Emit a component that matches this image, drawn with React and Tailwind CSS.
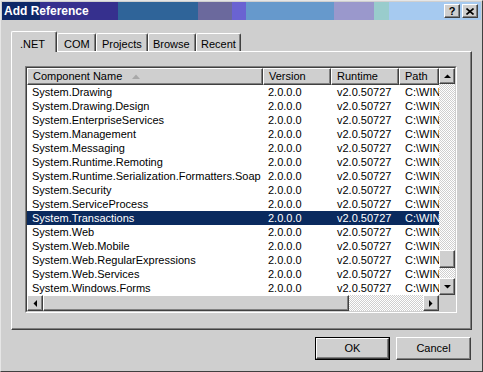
import React from "react";

const raised =
  "border border-t-white border-l-white border-r-[#404040] border-b-[#404040] shadow-[inset_-1px_-1px_#808080]";
const checker =
  "bg-[repeating-conic-gradient(#cfcfcf_0%_25%,#ffffff_0%_50%)] bg-[length:2px_2px]";

const assemblies = [
  "System.Drawing",
  "System.Drawing.Design",
  "System.EnterpriseServices",
  "System.Management",
  "System.Messaging",
  "System.Runtime.Remoting",
  "System.Runtime.Serialization.Formatters.Soap",
  "System.Security",
  "System.ServiceProcess",
  "System.Transactions",
  "System.Web",
  "System.Web.Mobile",
  "System.Web.RegularExpressions",
  "System.Web.Services",
  "System.Windows.Forms",
];

// little black triangle for the scroll buttons
const Arrow = ({ dir }) => {
  const pts = {
    up: "0,4 7,4 3.5,0.5",
    down: "0,0 7,0 3.5,3.5",
    left: "4,0 4,7 0.5,3.5",
    right: "0,0 0,7 3.5,3.5",
  }[dir];
  const vert = dir === "up" || dir === "down";
  return (
    <svg width={vert ? 7 : 4} height={vert ? 4 : 7} viewBox={vert ? "0 0 7 4" : "0 0 4 7"}>
      <polygon points={pts} fill="#000" />
    </svg>
  );
};

const HeaderCell = ({ w, children, grow }) => (
  <div
    className={`${raised} h-[17px] flex items-center pl-[5px] bg-[#cfcfcf] ${grow ? "flex-1" : ""}`}
    style={grow ? undefined : { width: w }}
  >
    {children}
  </div>
);

export default function App() {
  return (
    <div
      className="w-[483px] h-[372px] bg-[#cfcfcf] border border-t-[#e6e6e6] border-l-[#e6e6e6] border-r-[#404040] border-b-[#404040] p-[1px] flex flex-col text-[11px] text-black overflow-hidden"
      style={{ fontFamily: '"Liberation Sans", Arial, sans-serif' }}
    >
      {/* title bar */}
      <div className="h-[18px] flex items-center justify-between pl-[2px] pr-[3px] bg-[linear-gradient(to_right,#0e2868_0px,#0e2868_38px,#36308e_38px,#36308e_116px,#2f6499_116px,#2f6499_196px,#6b699d_196px,#6b699d_230px,#6a63d2_230px,#6a63d2_244px,#6699cc_244px,#6699cc_332px,#9a98cc_332px,#9a98cc_372px,#99cccc_372px,#99cccc_387px,#a6caf0_387px,#a6caf0_100%)]">
        <span className="text-white font-bold text-[12px] leading-none">Add Reference</span>
        <div className="flex gap-[2px]">
          <div className={`${raised} w-[16px] h-[14px] bg-[#cfcfcf] flex items-center justify-center font-bold text-[11px] leading-none`}>
            ?
          </div>
          <div className={`${raised} w-[16px] h-[14px] bg-[#cfcfcf] flex items-center justify-center`}>
            <svg width="8" height="7" viewBox="0 0 8 7">
              <path d="M0.5 0.5 L7.5 6.5 M7.5 0.5 L0.5 6.5" stroke="#000" strokeWidth="1.6" />
            </svg>
          </div>
        </div>
      </div>

      {/* tabs */}
      <div className="mt-[11px] ml-[9px] h-[20px] flex items-end">
        <div className="relative z-10 w-[46px] h-[21px] -mb-[1px] bg-[#cfcfcf] border-t border-l border-white border-r border-r-[#404040] shadow-[inset_-1px_0_#808080] rounded-t-[2px] pl-[8px] pt-[4px]">
          .NET
        </div>
        <div className="w-[39px] h-[18px] border-t border-l border-white border-r border-r-[#404040] shadow-[inset_-1px_0_#808080] rounded-t-[2px] pl-[6px] pt-[2px]">
          COM
        </div>
        <div className="w-[52px] h-[18px] border-t border-l border-white border-r border-r-[#404040] shadow-[inset_-1px_0_#808080] rounded-t-[2px] pl-[5px] pt-[2px]">
          Projects
        </div>
        <div className="w-[48px] h-[18px] border-t border-l border-white border-r border-r-[#404040] shadow-[inset_-1px_0_#808080] rounded-t-[2px] pl-[4px] pt-[2px]">
          Browse
        </div>
        <div className="w-[45px] h-[18px] border-t border-l border-white border-r border-r-[#404040] shadow-[inset_-1px_0_#808080] rounded-t-[2px] pl-[4px] pt-[2px]">
          Recent
        </div>
      </div>

      {/* tab panel */}
      <div className="ml-[9px] w-[461px] h-[279px] border border-t-white border-l-white border-r-[#404040] border-b-[#404040] shadow-[inset_-1px_-1px_#808080] pt-[14px] pl-[13px]">
        <div className="w-[432px] h-[247px] border border-t-[#808080] border-l-[#808080] border-r-white border-b-white">
          <div className="w-full h-full border border-t-[#404040] border-l-[#404040] border-r-[#cfcfcf] border-b-[#cfcfcf] flex flex-col bg-white">
            <div className="flex h-[227px]">
              <div className="w-[412px] flex flex-col overflow-hidden">
                <div className="flex">
                  <HeaderCell w={236}>
                    <span>Component Name</span>
                    <svg width="8" height="5" viewBox="0 0 8 5" className="ml-[10px]">
                      <polygon points="0,5 8,5 4,0.5" fill="#a8a8a8" />
                    </svg>
                  </HeaderCell>
                  <HeaderCell w={68}>Version</HeaderCell>
                  <HeaderCell w={68}>Runtime</HeaderCell>
                  <HeaderCell grow>Path</HeaderCell>
                </div>
                {assemblies.map((name) => {
                  const sel = name === "System.Transactions";
                  return (
                    <div
                      key={name}
                      className={`flex h-[14px] items-center whitespace-nowrap ${sel ? "bg-[#0a2a5e] text-white" : ""}`}
                    >
                      <div className="w-[236px] pl-[5px] overflow-hidden">{name}</div>
                      <div className="w-[68px] pl-[5px]">2.0.0.0</div>
                      <div className="w-[68px] pl-[6px]">v2.0.50727</div>
                      <div className="flex-1 pl-[6px] overflow-hidden">C:\WIN</div>
                    </div>
                  );
                })}
              </div>

              {/* vertical scrollbar */}
              <div className="w-[16px] flex flex-col">
                <div className={`${raised} h-[16px] bg-[#cfcfcf] flex items-center justify-center`}>
                  <Arrow dir="up" />
                </div>
                <div className={`h-[166px] ${checker}`} />
                <div className={`${raised} h-[18px] bg-[#cfcfcf]`} />
                <div className={`flex-1 ${checker}`} />
                <div className={`${raised} h-[17px] bg-[#cfcfcf] flex items-center justify-center`}>
                  <Arrow dir="down" />
                </div>
              </div>
            </div>

            {/* horizontal scrollbar */}
            <div className="flex h-[16px]">
              <div className={`${raised} w-[16px] bg-[#cfcfcf] flex items-center justify-center`}>
                <Arrow dir="left" />
              </div>
              <div className={`${raised} w-[306px] bg-[#cfcfcf]`} />
              <div className={`flex-1 ${checker}`} />
              <div className={`${raised} w-[16px] bg-[#cfcfcf] flex items-center justify-center`}>
                <Arrow dir="right" />
              </div>
              <div className="w-[16px] bg-[#cfcfcf]" />
            </div>
          </div>
        </div>
      </div>

      {/* buttons */}
      <div className="mt-[7px] flex justify-end gap-[6px] pr-[10px]">
        <div className="w-[75px] h-[23px] border border-black">
          <div className={`${raised} w-full h-full bg-[#cfcfcf] flex items-center justify-center`}>OK</div>
        </div>
        <div className={`${raised} w-[75px] h-[23px] bg-[#cfcfcf] flex items-center justify-center`}>Cancel</div>
      </div>
    </div>
  );
}
